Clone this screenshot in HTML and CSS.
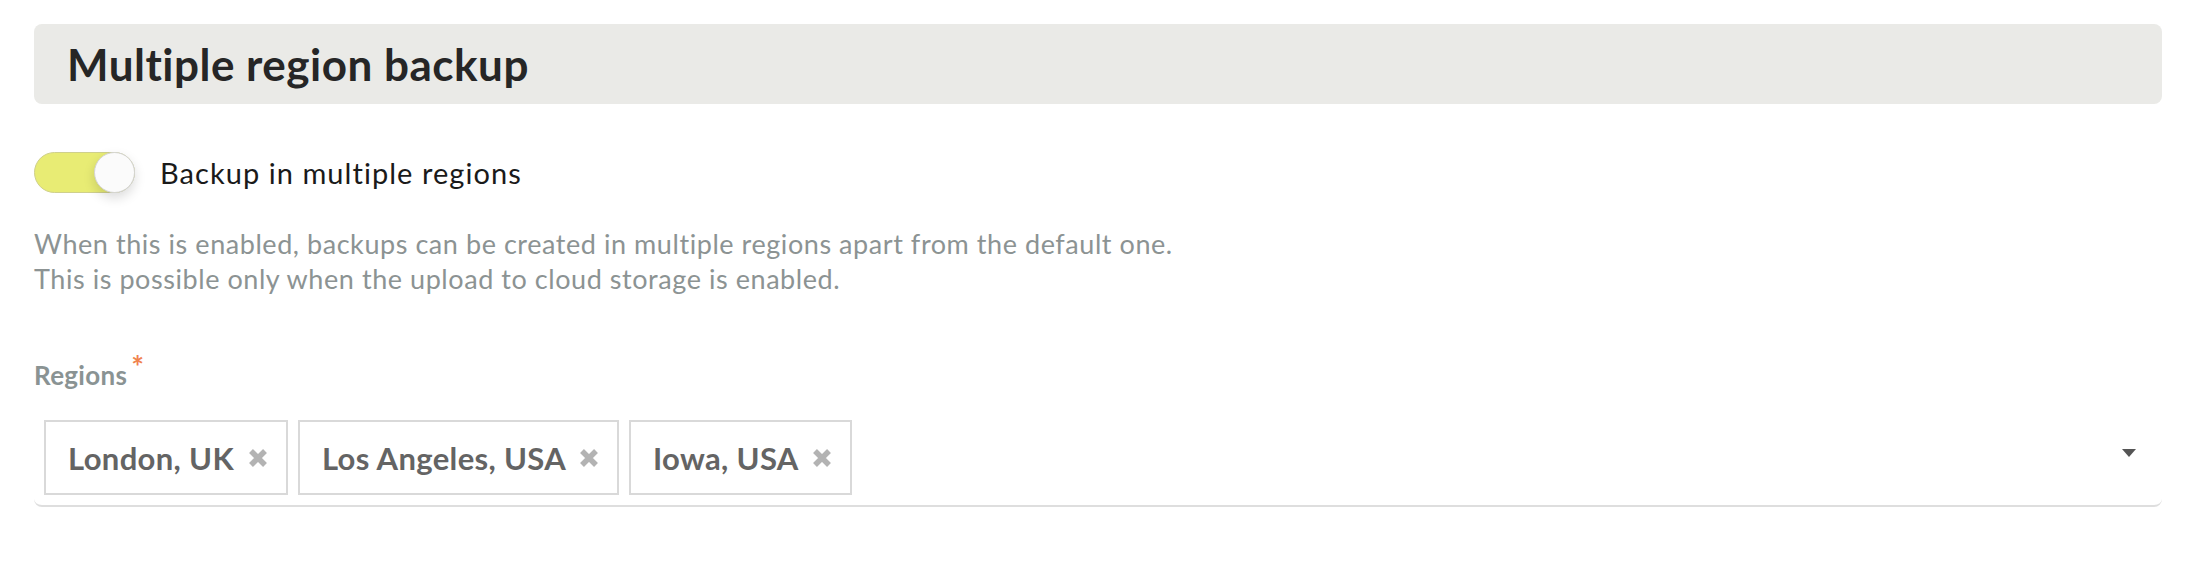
FILE: index.html
```html
<!DOCTYPE html>
<html lang="en">
<head>
<meta charset="utf-8">
<title>Multiple region backup</title>
<link rel="stylesheet" href="styles.css">
</head>
<body>
<main class="page">
  <header class="section-header">
    <h2 class="section-title">Multiple region backup</h2>
  </header>

  <div class="toggle-row">
    <span class="toggle" role="switch" aria-checked="true"><span class="knob"></span></span>
    <span class="toggle-label">Backup in multiple regions</span>
  </div>

  <p class="help">When this is enabled, backups can be created in multiple regions apart from the default one.<br>This is possible only when the upload to cloud storage is enabled.</p>

  <div class="field">
    <label class="field-label">Regions<span class="req">*</span></label>
    <div class="select">
      <div class="chips">
        <span class="chip">London, UK <svg class="x" viewBox="0 0 20 18" width="20" height="18"><path d="M3 2 L17 16 M17 2 L3 16"/></svg></span>
        <span class="chip">Los Angeles, USA <svg class="x" viewBox="0 0 20 18" width="20" height="18"><path d="M3 2 L17 16 M17 2 L3 16"/></svg></span>
        <span class="chip">Iowa, USA <svg class="x" viewBox="0 0 20 18" width="20" height="18"><path d="M3 2 L17 16 M17 2 L3 16"/></svg></span>
      </div>
      <span class="caret"></span>
    </div>
  </div>
</main>
</body>
</html>
```
FILE: styles.css
```css
* { box-sizing: border-box; }
html, body { margin: 0; padding: 0; background: #ffffff; }
body { font-family: Lato, "Open Sans", sans-serif; }

.page {
  padding: 24px 30px 0 34px;
}

.section-header {
  height: 80px;
  background: #eaeae7;
  border-radius: 8px;
  display: flex;
  align-items: center;
  padding-left: 33px;
}
.section-title {
  margin: 0;
  font-size: 44px;
  font-weight: 700;
  color: #262626;
  letter-spacing: 0.5px;
}

.toggle-row {
  display: flex;
  align-items: center;
  margin-top: 48px;
  gap: 25px;
}
.toggle {
  position: relative;
  width: 101px;
  height: 41px;
  border-radius: 21px;
  background: #e8ec74;
  border: 1px solid #cfd08c;
  display: inline-block;
  flex: none;
}
.knob {
  position: absolute;
  top: -1px;
  right: -1px;
  width: 41px;
  height: 41px;
  border-radius: 50%;
  background: #fbfbfb;
  border: 1px solid #d4d4d4;
  box-shadow: 0 5px 12px rgba(0,0,0,0.14);
}
.toggle-label {
  font-size: 29px;
  letter-spacing: 1.05px;
  color: #1a1a1a;
}

.help {
  margin: 33px 0 0 0;
  font-size: 27px;
  letter-spacing: 0.56px;
  line-height: 35px;
  color: #8c9393;
}

.field { margin-top: 64px; }
.field-label {
  display: block;
  font-size: 26px;
  font-weight: 700;
  color: #8a9393;
  line-height: 30px;
  letter-spacing: 0.3px;
}
.req {
  color: #f0834f;
  font-size: 30px;
  font-weight: 700;
  line-height: 30px;
  vertical-align: top;
  position: relative;
  top: -9px;
  margin-left: 4px;
}

.select {
  margin-top: 22px;
  display: flex;
  align-items: center;
  justify-content: space-between;
  border-bottom: 2px solid #dedede;
  border-radius: 8px;
  padding: 8px 26px 10px 10px;
}
.chips {
  display: flex;
  gap: 10px;
}
.chip {
  display: inline-flex;
  align-items: center;
  height: 75px;
  padding: 0 18px 0 22px;
  border: 2px solid #d9d9d9;
  font-size: 31px;
  font-weight: 700;
  letter-spacing: 0.35px;
  color: #646464;
  white-space: pre;
}
.x {
  margin-left: 6px;
  stroke: #b3b3b3;
  stroke-width: 5.5;
  fill: none;
  flex: none;
}
.caret {
  width: 0;
  height: 0;
  border-left: 7px solid transparent;
  border-right: 7px solid transparent;
  border-top: 8px solid #555555;
  margin-bottom: 10px;
}
```
